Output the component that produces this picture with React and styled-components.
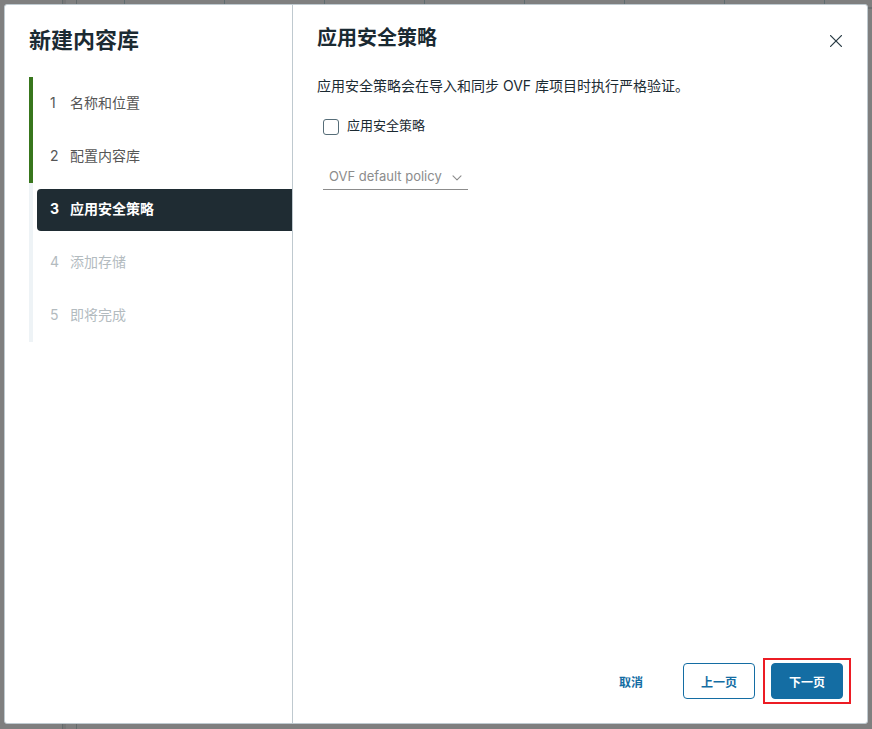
import { useState } from "react";
import styled, { createGlobalStyle } from "styled-components";

const GlobalStyle = createGlobalStyle`
    *{
        box-sizing: border-box;
    }

    body{
        margin: 0;
        font-family: Inter, "Noto Sans CJK SC", sans-serif;
        color: #1b2a32;
    }

    h1, h2, p, ol{
        margin: 0;
        padding: 0;
    }

    button{
        font-family: inherit;
        cursor: pointer;
    }
`

const Backdrop = styled.div`
    display: flex;
    min-height: 100vh;
    padding: 4px 4px 5px;
    background-color: #7f7f7f;
    background-image:
        linear-gradient(90deg, transparent 62px, #646b6c 62px, #646b6c 63px, #777777 63px, #777777 66px, transparent 66px, transparent 76px, #646b6c 76px, #646b6c 77px, transparent 77px),
        linear-gradient(#6b7071, #6b7071),
        repeating-linear-gradient(90deg, transparent 0, transparent 24px, #5f6c6f 24px, #5f6c6f 25px, transparent 25px, transparent 100px);
    background-size: 100% 100%, 4px 2px, calc(100% - 100px) 4px;
    background-position: 0 0, 100% 7px, 100px 0;
    background-repeat: no-repeat;
`

const Dialog = styled.div`
    flex: 1;
    display: flex;
    background: white;
    border: 1px solid #bfcad0;
    border-radius: 3px;
    overflow: hidden;
`

const Sidebar = styled.nav`
    flex: 0 0 288px;
    padding: 20px 0 0 24px;
    border-right: 1px solid #bfc9cf;
`

const DialogTitle = styled.h1`
    font-size: 22px;
    line-height: 30px;
    font-weight: 700;
    margin-bottom: 22px;
`

const StepList = styled.ol`
    list-style: none;
`

const Step = styled.li`
    padding: 6px 0 5px 4px;
    border-left: 4px solid ${props => props.$done ? "#38761d" : "#eef3f6"};
`

const StepButton = styled.button`
    display: flex;
    align-items: baseline;
    width: 100%;
    height: 42px;
    padding: 0 0 2px 13px;
    border: none;
    border-radius: 4px 0 0 4px;
    background: ${props => props.$current ? "#1f2c33" : "transparent"};
    color: ${props => props.$current ? "white" : "#565656"};
    font-size: 14px;
    line-height: 40px;
    font-weight: ${props => props.$current ? 700 : 400};
    text-align: left;

    &:disabled{
        color: #b3bbbf;
        cursor: default;
    }
`

const StepNumber = styled.span`
    width: 20px;
`

const Panel = styled.main`
    flex: 1;
    display: flex;
    flex-direction: column;
    padding: 16px 16px 19px 24px;
`

const PanelHeader = styled.header`
    display: flex;
    justify-content: space-between;
    align-items: flex-start;
    margin-bottom: 20px;
`

const PanelTitle = styled.h2`
    font-size: 20px;
    line-height: 34px;
    font-weight: 700;
`

const CloseButton = styled.button`
    display: flex;
    margin: 8px 3px 0 0;
    padding: 6px;
    border: none;
    background: none;
    color: #2d3f48;
`

const Description = styled.p`
    font-size: 14px;
    line-height: 22px;
    margin-bottom: 16px;
`

const Form = styled.div`
    flex: 1;
    display: flex;
    flex-direction: column;
    align-items: flex-start;
    gap: 28px;
    padding-left: 6px;
`

const CheckLabel = styled.label`
    display: flex;
    align-items: center;
    gap: 8px;
    font-size: 13px;
    line-height: 24px;
`

const Checkbox = styled.input`
    appearance: none;
    width: 16px;
    height: 16px;
    margin: 4px 0 0;
    border: 1px solid #566d78;
    border-radius: 3px;
    background: white;

    &:checked{
        background: #146da3;
    }
`

const SelectBox = styled.div`
    display: flex;
    align-items: center;
    color: #8c8c8c;
    border-bottom: 1px solid #8c8c8c;

    svg{
        margin: 2px 6px 0 -16px;
        pointer-events: none;
    }
`

const Select = styled.select`
    appearance: none;
    width: 145px;
    height: 24px;
    padding: 0 20px 2px 6px;
    border: none;
    background: transparent;
    font-family: inherit;
    font-size: 13px;

    &:disabled{
        color: #8c8c8c;
        opacity: 1;
    }
`

const Footer = styled.footer`
    display: flex;
    justify-content: flex-end;
    align-items: center;
    gap: 8px;
`

const Button = styled.button`
    min-width: 72px;
    height: 36px;
    padding: 0 12px;
    border: 1px solid ${props => props.$kind === "link" ? "transparent" : "#146da3"};
    border-radius: 4px;
    background: ${props => props.$kind === "primary" ? "#146da3" : "transparent"};
    color: ${props => props.$kind === "primary" ? "white" : "#146da3"};
    font-size: 12px;
    font-weight: 700;
`

const CancelButton = styled(Button)`
    margin-right: 8px;
`

const Highlight = styled.div`
    padding: 3px 6px;
    border: 2px solid #ec1c24;
`

const steps = ["名称和位置", "配置内容库", "应用安全策略", "添加存储", "即将完成"];
const current = 2;

function App(){
    const [secure, setSecure] = useState(false);

    return(
        <Backdrop>
            <GlobalStyle />
            <Dialog role="dialog" aria-labelledby="dialog-title">
                <Sidebar>
                    <DialogTitle id="dialog-title">新建内容库</DialogTitle>
                    <StepList>
                        {steps.map((step, i) => (
                            <Step key={step} $done={i < current}>
                                <StepButton
                                    $current={i === current}
                                    aria-current={i === current ? "step" : undefined}
                                    disabled={i > current}
                                >
                                    <StepNumber>{i + 1}</StepNumber>
                                    {step}
                                </StepButton>
                            </Step>
                        ))}
                    </StepList>
                </Sidebar>

                <Panel>
                    <PanelHeader>
                        <PanelTitle>应用安全策略</PanelTitle>
                        <CloseButton aria-label="关闭">
                            <svg width="12" height="12" viewBox="0 0 12 12" fill="none" stroke="currentColor" strokeWidth="1.3" strokeLinecap="round">
                                <path d="M0.6 0.6 L11.4 11.4 M11.4 0.6 L0.6 11.4" />
                            </svg>
                        </CloseButton>
                    </PanelHeader>

                    <Description>应用安全策略会在导入和同步 OVF 库项目时执行严格验证。</Description>

                    <Form>
                        <CheckLabel>
                            <Checkbox
                                type="checkbox"
                                checked={secure}
                                onChange={e => setSecure(e.target.checked)}
                            />
                            应用安全策略
                        </CheckLabel>
                        <SelectBox>
                            <Select aria-label="应用安全策略" disabled={!secure}>
                                <option>OVF default policy</option>
                            </Select>
                            <svg width="10" height="6" viewBox="0 0 10 6" fill="none" stroke="currentColor" strokeWidth="1.1" strokeLinecap="round" strokeLinejoin="round">
                                <path d="M1 0.8 L5 4.8 L9 0.8" />
                            </svg>
                        </SelectBox>
                    </Form>

                    <Footer>
                        <CancelButton $kind="link">取消</CancelButton>
                        <Button $kind="outline">上一页</Button>
                        <Highlight>
                            <Button $kind="primary">下一页</Button>
                        </Highlight>
                    </Footer>
                </Panel>
            </Dialog>
        </Backdrop>
    )
}
export default App
